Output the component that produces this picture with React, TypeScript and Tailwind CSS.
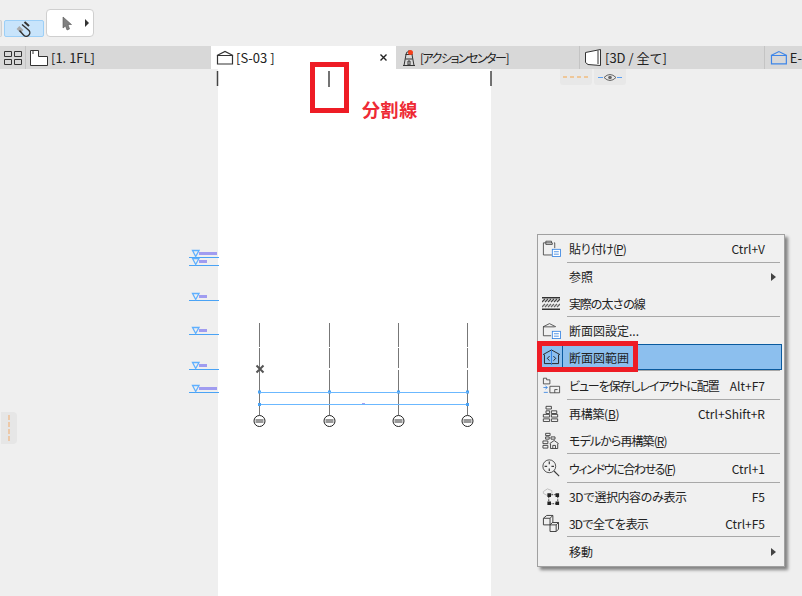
const K = "#3a3a3a";
const B = "#2f7fe0";

const SectionIcon = ({ color = "#333" }: { color?: string }) => (
  <svg width="18" height="15" viewBox="0 0 18 15" fill="none" stroke={color} strokeWidth="1.2">
    <path d="M1 5.5 L9 1.5 L17 5.5" />
    <path d="M1.5 5.5 H16.5 V14 H1.5 Z" />
  </svg>
);

const NoteBadge = () => (
  <g>
    <rect x="12.5" y="11.5" width="10" height="9" fill="#fff" stroke={B} />
    <path d="M14.5 14.5H20.5M14.5 17.5H20.5" stroke={B} />
  </g>
);

const icons: Record<string, { vb: string; w: number; h: number; node: React.ReactNode }> = {
  paste: {
    vb: "0 0 23 21",
    w: 19,
    h: 17,
    node: (
      <g fill="none" stroke={K}>
        <path d="M4.5 3.5H1.5V18.5H12" />
        <path d="M4.5 3.5V1.5H11.5V3.5M14.5 3.5H15.5V10" />
        <path d="M4.5 3.5H12.5V5.5H4.5Z" />
        <NoteBadge />
      </g>
    ),
  },
  thick: {
    vb: "0 0 18 13",
    w: 18,
    h: 13,
    node: (
      <g>
        <rect x="0" y="0" width="18" height="1.5" fill="#333" />
        <rect x="0" y="11.5" width="18" height="1.5" fill="#333" />
        <path d="M0 5L3 2M3 5L6 2M6 5L9 2M9 5L12 2M12 5L15 2M15 5L18 2" stroke="#444" strokeWidth="1.3" />
        <path d="M0 10L3 7M3 10L6 7M6 10L9 7M9 10L12 7M12 10L15 7M15 10L18 7" stroke="#666" strokeWidth="1.3" />
      </g>
    ),
  },
  settings: {
    vb: "0 0 23 21",
    w: 19,
    h: 17,
    node: (
      <g fill="none" stroke={K}>
        <path d="M1 6L9 2L17 6" />
        <path d="M1.5 6H15.5M1.5 6V17H11" />
        <NoteBadge />
      </g>
    ),
  },
  range: {
    vb: "0 0 20 17",
    w: 19,
    h: 16,
    node: (
      <g fill="none" stroke="#222">
        <path d="M1 6L10 1L19 6" />
        <path d="M2.5 6V15.5H17.5V6" />
        <path d="M8 7.5L5.5 10L8 12.5M12 7.5L14.5 10L12 12.5" />
        <path d="M10 0V17" stroke="#2f7fe0" />
      </g>
    ),
  },
  layout: {
    vb: "0 0 23 21",
    w: 19,
    h: 17,
    node: (
      <g fill="none" stroke={K}>
        <path d="M1.5 1.5H5.5V3.5H9.5V8.5H1.5Z" />
        <path d="M9.5 11.5H21.5V19.5H9.5ZM15.5 15.5H19M15.5 15.5V19.5" />
        <path d="M1.5 13H6M4 11L6.5 13L4 15M2 19H7" stroke={B} />
      </g>
    ),
  },
  rebuild: {
    vb: "0 0 17 19",
    w: 17,
    h: 17,
    node: (
      <g fill="none" stroke={K}>
        <path d="M3.5 1.5H9.5V4.5H3.5ZM9.5 6.5H15.5V9.5H9.5ZM.5 10.5H7.5V13.5H.5ZM9.5 10.5H16.5V13.5H9.5ZM.5 15.5H7.5V18.5H.5ZM9.5 15.5H16.5V18.5H9.5Z" />
        <path d="M3.5 6.5H7.5V9.5H3.5Z" />
      </g>
    ),
  },
  model: {
    vb: "0 0 19 19",
    w: 18,
    h: 17,
    node: (
      <g fill="none" stroke={K}>
        <path d="M3.5 1.5H8.5V4H3.5ZM9.5 5.5H14V8H9.5ZM3.5 5.5H7.5V8H3.5ZM.5 10H6V13H.5ZM.5 15H6V18H.5Z" />
        <path d="M8 13L13 9.5L18 13M9 13V18.5H17V13" />
        <path d="M11.5 18.5V15H14.5V18.5" />
      </g>
    ),
  },
  fit: {
    vb: "0 0 21 21",
    w: 18,
    h: 18,
    node: (
      <g fill="none" stroke={K}>
        <circle cx="8.5" cy="8.5" r="7.5" />
        <path d="M14 14L20 20" strokeWidth="1.3" />
        <path d="M8.5 3V6M8.5 11V14M3 8.5H6M11 8.5H14" strokeWidth="1.4" />
      </g>
    ),
  },
  sel3d: {
    vb: "0 0 20 21",
    w: 18,
    h: 19,
    node: (
      <g fill="none">
        <path d="M1.5 5L6 2L11 4V9H5L1.5 7Z" stroke="#bbb" />
        <path d="M7.5 8.5H17.5V18.5H7.5Z" stroke="#333" strokeDasharray="2 1" />
        <path d="M6 7h4v4H6zM15 7h4v4h-4zM6 16h4v4H6zM15 16h4v4h-4z" fill="#222" />
      </g>
    ),
  },
  all3d: {
    vb: "0 0 18 19",
    w: 17,
    h: 18,
    node: (
      <g fill="none" stroke={K}>
        <path d="M1.5 4.5L5 1.5H11.5V8.5L9 11.5H1.5Z" />
        <path d="M1.5 4.5H8.5V11.5M8.5 4.5L11.5 1.5" />
        <path d="M8.5 11.5L11 9H17.5V16L15 18.5H8.5Z" fill="#f0f0f0" />
        <path d="M8.5 11.5H15V18.5M15 11.5L17.5 9" />
      </g>
    ),
  },
};

type Row = {
  icon?: string;
  label: string;
  mnemonic?: string;
  shortcut?: string;
  sub?: boolean;
  h: string;
  sep?: boolean;
  active?: boolean;
  track?: string;
};

const rows: Row[] = [
  { icon: "paste", label: "貼り付け", mnemonic: "P", shortcut: "Ctrl+V", h: "h-[27px]", sep: true, track: "tracking-[-1px]" },
  { label: "参照", sub: true, h: "h-[27px]" },
  { icon: "thick", label: "実際の太さの線", h: "h-[26px]", sep: true, track: "tracking-[-1.2px]" },
  { icon: "settings", label: "断面図設定...", h: "h-[27px]" },
  { icon: "range", label: "断面図範囲", h: "h-[26px]", sep: true, active: true },
  { icon: "layout", label: "ビューを保存しレイアウトに配置", shortcut: "Alt+F7", h: "h-[28px]", sep: true, track: "tracking-[-1.1px] [font-feature-settings:'palt']" },
  { icon: "rebuild", label: "再構築", mnemonic: "B", shortcut: "Ctrl+Shift+R", h: "h-[27px]", track: "tracking-[-0.3px]" },
  { icon: "model", label: "モデルから再構築", mnemonic: "R", h: "h-[26px]", sep: true, track: "tracking-[-0.9px] [font-feature-settings:'palt']" },
  { icon: "fit", label: "ウィンドウに合わせる", mnemonic: "F", shortcut: "Ctrl+1", h: "h-[28px]", sep: true, track: "tracking-[-1.4px] [font-feature-settings:'palt']" },
  { icon: "sel3d", label: "3Dで選択内容のみ表示", shortcut: "F5", h: "h-[27px]", track: "tracking-[-0.5px]" },
  { icon: "all3d", label: "3Dで全てを表示", shortcut: "Ctrl+F5", h: "h-[26px]", sep: true, track: "tracking-[-1px]" },
  { label: "移動", sub: true, h: "h-[29px]" },
];

const MenuRow = ({ row }: { row: Row }) => {
  const icon = row.icon ? icons[row.icon] : null;
  return (
    <div
      className={`flex items-center mr-[2px] ${row.h} ${
        row.active ? "bg-[#8cbfee] border border-[#0a5a9e]" : "border border-transparent"
      }`}
    >
      <div className={`w-[24px] h-full flex items-center pl-[3px] shrink-0 ${row.active ? "border-r border-[#0a5a9e]" : ""}`}>
        {icon && (
          <svg className="shrink-0" width={icon.w} height={icon.h} viewBox={icon.vb}>
            {icon.node}
          </svg>
        )}
      </div>
      <span className={`ml-[6px] pt-px whitespace-nowrap ${row.track ?? ""}`}>
        {row.label}
        {row.mnemonic && (
          <>
            (<u>{row.mnemonic}</u>)
          </>
        )}
      </span>
      {row.shortcut && <span className="ml-auto mr-[16px] pt-px whitespace-nowrap">{row.shortcut}</span>}
      {row.sub && <span className="ml-auto mr-[5px] w-0 h-0 border-y-[4px] border-y-transparent border-l-[5px] border-l-[#444]" />}
    </div>
  );
};

const ContextMenu = () => (
  <div className="absolute left-[537px] top-[165px] w-[248px] h-[333px] bg-[#f0f0f0] border border-[#a0a0a0] shadow-[3px_3px_3px_rgba(0,0,0,0.45)] text-[12px] leading-none text-[#222] flex flex-col">
    {rows.map((row) => (
      <div key={row.label}>
        <MenuRow row={row} />
        {row.sep && <div className="h-px bg-[#a8a8a8] ml-[29px] mr-[4px]" />}
      </div>
    ))}
  </div>
);

const levels = [
  { y: 257, bar: 18 },
  { y: 265, bar: 8 },
  { y: 300, bar: 8 },
  { y: 334, bar: 8 },
  { y: 369, bar: 8 },
  { y: 392, bar: 18 },
];
const axes = [260, 330, 399, 468];

const SectionDrawing = () => (
  <svg className="absolute left-0 top-0" width="802" height="527" viewBox="0 69 802 527" fill="none">
    {levels.map((l) => (
      <g key={l.y}>
        <path d={`M189 ${l.y + 0.5}H219`} stroke="#4aa3f5" />
        <path d={`M192.5 ${l.y - 6.5}H199L195.7 ${l.y - 0.5}Z`} stroke="#5fb0ff" strokeWidth="1.3" />
        <rect x="199" y={l.y - 5} width={l.bar} height="3" fill="#a09cf0" />
      </g>
    ))}
    {axes.map((x) => (
      <g key={x}>
        <path d={`M${x - 0.5} 323V347M${x - 0.5} 348V368M${x - 0.5} 370V415`} stroke="#777" />
        <circle cx={x - 0.5} cy="421" r="5.5" stroke="#222" fill="#fff" />
        <rect x={x - 4.5} y="419" width="8" height="4" fill="#999" />
        <rect x={x - 2} y="390.5" width="3" height="3" fill="#4aa3f5" />
      </g>
    ))}
    <path d="M260 392.5H468M260 404.5H468" stroke="#6bb8ff" />
    <rect x="258" y="403" width="3" height="3" fill="#4aa3f5" />
    <rect x="466" y="403" width="3" height="3" fill="#4aa3f5" />
    <rect x="362" y="403" width="3" height="1" fill="#a5a0ee" />
    <path d="M256.5 365.5L263.5 372.5M263.5 365.5L256.5 372.5" stroke="#555" strokeWidth="2" />
    <path d="M329 71V87" stroke="#444" strokeWidth="1.5" />
    <path d="M217.5 71V86" stroke="#444" strokeWidth="1.5" />
    <path d="M491 71V86" stroke="#444" strokeWidth="1.5" />
  </svg>
);

export default function App() {
  return (
    <div className="w-[802px] h-[596px] overflow-hidden bg-[#efefef] flex flex-col font-['Noto_Sans_CJK_JP','Liberation_Sans',sans-serif] text-[#222]">
      <div className="h-[46px] relative flex items-end pb-[9px] shrink-0">
        <div className="w-[2px] h-[17px] bg-[#e4e4e4] rounded-r border-y border-r border-[#d0d0d0]" />
        <div className="ml-[2px] w-[40px] h-[17px] bg-[#c8e4fb] border border-[#9ccff7] rounded-[2px] flex items-center justify-center">
          <svg width="17" height="16" viewBox="0 0 17 16" fill="none">
            <path d="M2 6.5L6 10.5" stroke="#aaa" strokeWidth="4" />
            <path d="M6 3.5L13 9.5A3.3 3.3 0 0 1 7.5 14L3.5 9.5" stroke="#333" strokeWidth="1.4" />
            <path d="M8.5 1L13 5" stroke="#333" strokeWidth="2" />
          </svg>
        </div>
        <div className="ml-[2px] w-[48px] h-[28px] bg-white border border-[#cfcfcf] rounded-[4px] flex items-center">
          <svg className="ml-[15px]" width="10" height="15" viewBox="0 0 10 15">
            <path d="M1 1L9.5 8.5H6L7.5 13L5 14L3.5 10L1 12Z" fill="#808080" stroke="#555" strokeWidth="0.6" />
          </svg>
          <span className="ml-[13px] w-0 h-0 border-y-[4px] border-y-transparent border-l-[4px] border-l-[#333]" />
        </div>
      </div>

      <div className="h-[23px] bg-[#d8d8d8] flex text-[13px] leading-none shrink-0">
        <div className="w-[26px] flex items-center pl-[4px] border-r border-[#c4c4c4]">
          <svg width="18" height="15" viewBox="0 0 18 15" fill="none" stroke="#333">
            <path d="M.5 1.5H7.5V6.5H.5ZM10.5 1.5H17.5V6.5H10.5ZM.5 9.5H7.5V14.5H.5ZM10.5 9.5H17.5V14.5H10.5Z" />
          </svg>
        </div>
        <div className="w-[185px] flex items-center pl-[4px]">
          <svg width="18" height="16" viewBox="0 0 18 16" fill="#fff" stroke="#333">
            <path d="M.5 .5H8.5V6.5H17.5V15.5H.5Z" />
            <path d="M3 .5V4" />
          </svg>
          <span className="ml-[3px] whitespace-nowrap">[1. 1FL]</span>
        </div>
        <div className="w-[185px] bg-white flex items-center pl-[5px]">
          <SectionIcon />
          <span className="ml-[2px] whitespace-nowrap">[S-03 ]</span>
          <svg className="ml-auto mr-[9px]" width="7" height="7" viewBox="0 0 7 7">
            <path d="M.5 .5L6.5 6.5M6.5 .5L.5 6.5" stroke="#222" strokeWidth="1.4" />
          </svg>
        </div>
        <div className="w-[184px] flex items-center pl-[6px] border-r border-[#c4c4c4] relative">
          <svg width="14" height="17" viewBox="0 0 14 17" fill="none" stroke="#333">
            <path d="M4 5.5A3 3 0 0 1 10 5.5M3.5 5.5H10.5M4 5.5L2 16.5H12L10 5.5M1 16.5H13M3.5 10H10.5M7 1V2.5" />
            <path d="M6 12H8V16H6Z" />
          </svg>
          <span className="absolute left-[12px] top-[4px] w-[5px] h-[5px] rounded-full bg-[#f4401c]" />
          <span className="ml-[4px] whitespace-nowrap text-[12px] tracking-[-1.5px] [font-feature-settings:'palt']">[アクションセンター]</span>
        </div>
        <div className="w-[185px] flex items-center pl-[5px] border-r border-[#c4c4c4]">
          <svg width="17" height="17" viewBox="0 0 17 17" fill="#fff" stroke="#333">
            <path d="M.5 3.5L15.5 .5V16.5L3 15.5L.5 13.5Z" />
            <path d="M13 1.5V15" />
          </svg>
          <span className="ml-[3px] whitespace-nowrap">[3D / 全て]</span>
        </div>
        <div className="flex-1 flex items-center pl-[5px] overflow-hidden">
          <SectionIcon color="#3d85e8" />
          <span className="ml-[2px] whitespace-nowrap">E-</span>
        </div>
      </div>

      <div className="relative flex-1">
        <div className="absolute left-[218px] top-0 bottom-0 w-[273px] bg-white" />
        <SectionDrawing />

        <div className="absolute left-[560px] top-0 flex gap-[2px]">
          <div className="w-[32px] h-[16px] bg-[#e8e8e8] rounded-b-[3px] flex items-center justify-center">
            <svg width="26" height="2"><path d="M0 1H26" stroke="#f5a64b" strokeDasharray="4 3" /></svg>
          </div>
          <div className="w-[32px] h-[16px] bg-[#e8e8e8] rounded-b-[3px] flex items-center justify-center">
            <svg width="24" height="9" viewBox="0 0 24 9" fill="none">
              <path d="M0 4.5H5M19 4.5H24" stroke="#5c9ff0" />
              <path d="M6 4.5Q12 -1.5 18 4.5Q12 10.5 6 4.5Z" stroke="#666" />
              <circle cx="12" cy="4.5" r="1.8" fill="#666" />
            </svg>
          </div>
        </div>

        <div className="absolute left-[1px] top-[343px] w-[16px] h-[32px] bg-[#e6e6e6] rounded-r-[4px] flex justify-center">
          <svg width="2" height="32"><path d="M1 3V29" stroke="#f2ab6d" strokeDasharray="5 2" /></svg>
        </div>

        <div className="absolute left-[310px] -top-[7px] w-[39px] h-[51px] border-[5px] border-[#ee1c25]" />
        <div className="absolute left-[362px] top-[29px] text-[18px] leading-[22px] font-bold tracking-[0.6px] text-[#ee2a35]">分割線</div>

        <ContextMenu />
        <div className="absolute left-[537px] top-[272px] w-[101px] h-[31px] border-[5px] border-[#ee1c25]" />
      </div>
    </div>
  );
}
